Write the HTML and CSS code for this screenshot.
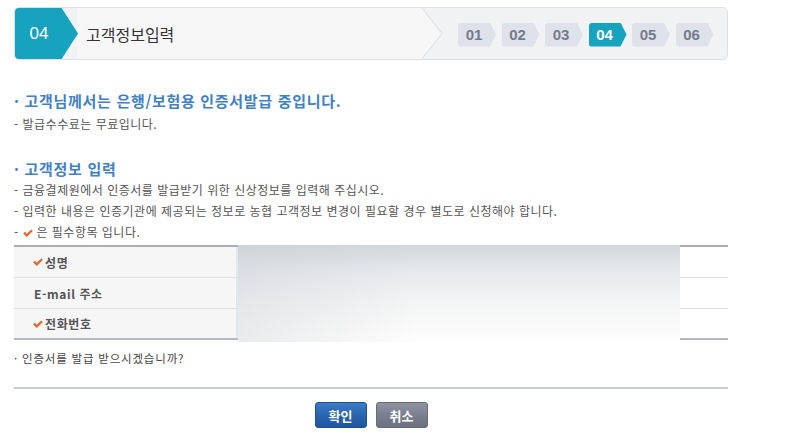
FILE: index.html
```html
<!DOCTYPE html>
<html lang="ko">
<head>
  <meta charset="UTF-8" />
  <title>인증서발급 – 고객정보입력</title>
  <link rel="stylesheet" href="styles.css">
</head>
<body>
  <div class="page">
    <div class="step-header">
      <div class="step-current">04</div>
      <div class="step-title">고객정보입력</div>
      <svg class="step-sep" width="22" height="53" viewBox="0 0 22 53">
        <polygon points="0,0 22,0 22,53 0,53 21,26.5" fill="#f1f2f4" />
        <polygon points="0,0 21,26.5 0,53" fill="#f7f7f7" />
        <polyline points="0,0 21,26.5 0,53" fill="none" stroke="#d9dce0" stroke-width="1" />
      </svg>
      <div class="step-list">
        <span class="chip">01</span>
        <span class="chip">02</span>
        <span class="chip">03</span>
        <span class="chip active">04</span>
        <span class="chip">05</span>
        <span class="chip">06</span>
      </div>
    </div>

    <h3 class="sec-title first">· 고객님께서는 은행/보험용 인증서발급 중입니다.</h3>
    <p class="note">- 발급수수료는 무료입니다.</p>

    <h3 class="sec-title second">· 고객정보 입력</h3>
    <ul class="notes">
      <li>- 금융결제원에서 인증서를 발급받기 위한 신상정보를 입력해 주십시오.</li>
      <li>- 입력한 내용은 인증기관에 제공되는 정보로 농협 고객정보 변경이 필요할 경우 별도로 신청해야 합니다.</li>
      <li>- <svg class="check" width="10" height="8" viewBox="0 0 10 8"><polyline points="1,3.6 3.8,6.4 9,1.2" fill="none" stroke="#e8642c" stroke-width="2.2" /></svg> 은 필수항목 입니다.</li>
    </ul>

    <div class="info-grid">
      <div class="label"><svg class="check" width="10" height="8" viewBox="0 0 10 8"><polyline points="1,3.6 3.8,6.4 9,1.2" fill="none" stroke="#e8642c" stroke-width="2.2" /></svg>성명</div>
      <div class="masked"></div>
      <div class="blank"></div>
      <div class="label plain">E-mail 주소</div>
      <div class="blank"></div>
      <div class="label last"><svg class="check" width="10" height="8" viewBox="0 0 10 8"><polyline points="1,3.6 3.8,6.4 9,1.2" fill="none" stroke="#e8642c" stroke-width="2.2" /></svg>전화번호</div>
      <div class="blank last"></div>
    </div>

    <p class="question">· 인증서를 발급 받으시겠습니까?</p>

    <div class="actions">
      <button type="button" class="btn btn-ok">확인</button>
      <button type="button" class="btn btn-cancel">취소</button>
    </div>
  </div>
</body>
</html>
```

FILE: styles.css
```css
body {
  margin: 0;
  padding: 0;
  background-color: #ffffff;
  font-family: "Noto Sans CJK KR", "Liberation Sans", sans-serif;
  color: #555;
}

.page {
  width: 714px;
  padding: 7px 0 0 14px;
}

/* step header */
.step-header {
  display: flex;
  height: 53px;
  border: 1px solid #dde0e4;
  border-radius: 5px;
  overflow: hidden;
  box-sizing: border-box;
  background-color: #f1f2f4;
}

.step-current {
  width: 64px;
  margin: -1px 0 -1px -1px;
  padding-right: 14px;
  box-sizing: border-box;
  background-color: #17a3bd;
  border-radius: 5px 0 0 5px;
  clip-path: polygon(0 0, 47px 0, 64px 50%, 47px 100%, 0 100%);
  color: #fff;
  font-family: "Liberation Sans", Arial, sans-serif;
  font-size: 17px;
  display: flex;
  align-items: center;
  justify-content: center;
}

.step-title {
  width: 344px;
  padding-left: 9px;
  box-sizing: border-box;
  background-color: #f7f7f7;
  color: #333;
  font-size: 16px;
  display: flex;
  align-items: center;
  margin-left: -1px;
}

.step-sep {
  display: block;
  flex: none;
  margin-top: -1px;
}

.step-list {
  display: flex;
  align-items: center;
  gap: 5.5px;
  padding: 2px 0 0 15px;
}

.chip {
  width: 38px;
  height: 24px;
  padding-right: 6px;
  box-sizing: border-box;
  background-color: #dfe2ea;
  border-radius: 3px 0 0 3px;
  clip-path: polygon(0 0, 32px 0, 38px 50%, 32px 100%, 0 100%);
  color: #747c8a;
  font-family: "Liberation Sans", Arial, sans-serif;
  font-weight: bold;
  font-size: 15px;
  display: flex;
  align-items: center;
  justify-content: center;
}

.chip.active {
  background-color: #17a3bd;
  color: #fff;
}

/* text blocks */
.sec-title {
  margin: 0;
  color: #3f80c6;
  font-size: 15px;
  font-weight: bold;
  line-height: 22px;
  letter-spacing: 0.7px;
}

.sec-title.first {
  margin-top: 30px;
}

.sec-title.second {
  margin-top: 23px;
  line-height: 21px;
}

.note {
  margin: 1px 0 0;
  font-size: 12px;
  line-height: 22px;
  letter-spacing: 0.5px;
  color: #555;
}

.notes {
  list-style: none;
  margin: 0;
  padding: 0;
  font-size: 12px;
  line-height: 21px;
  letter-spacing: 0.5px;
  color: #555;
}

.check {
  display: inline-block;
  vertical-align: 0;
}

/* info grid */
.info-grid {
  display: grid;
  grid-template-columns: 224px 442px 48px;
  grid-template-rows: 31px 31px 29px;
  margin-top: 3px;
  border-top: 2px solid #a7aeb9;
  border-bottom: 2px solid #b4bac4;
}

.label {
  display: flex;
  align-items: center;
  padding-left: 19px;
  background-color: #f6f6f6;
  border-right: 2px solid #e3e6ea;
  border-bottom: 1px solid #dde1e6;
  font-size: 12px;
  font-weight: bold;
  letter-spacing: 0.6px;
  color: #555;
}

.label .check {
  margin-right: 2px;
}

.label.plain {
  padding-left: 20px;
}

.label.last,
.blank.last {
  border-bottom: none;
}

.blank {
  border-bottom: 1px solid #dde1e6;
}

.masked {
  grid-column: 2;
  grid-row: 1 / 4;
  margin: -2px 0 -4px;
  background:
    linear-gradient(90deg, rgba(200, 203, 208, 0.35) 0%, rgba(255, 255, 255, 0) 40%),
    linear-gradient(180deg, #d3d6da 0%, #e6e8eb 25%, #f2f3f4 55%, #f9f9f9 80%, #fdfdfd 100%);
}

.question {
  margin: 9px 0 0;
  font-size: 11.5px;
  line-height: 18px;
  letter-spacing: 0.8px;
  color: #444;
  padding-bottom: 20px;
  border-bottom: 2px solid #c5cad3;
}

.actions {
  display: flex;
  justify-content: center;
  gap: 9px;
  margin-top: 13px;
}

.btn {
  width: 52px;
  height: 26px;
  border-radius: 3px;
  color: #fff;
  font-family: "Noto Sans CJK KR", sans-serif;
  font-size: 13px;
  font-weight: bold;
  cursor: pointer;
  padding: 0;
}

.btn-ok {
  background: linear-gradient(180deg, #3c7cc6 0%, #2a62ac 55%, #1f56a0 100%);
  border: 1px solid #1e4f92;
}

.btn-cancel {
  background: linear-gradient(180deg, #8e94a2 0%, #787e8d 55%, #6b7180 100%);
  border: 1px solid #656b79;
}
```
